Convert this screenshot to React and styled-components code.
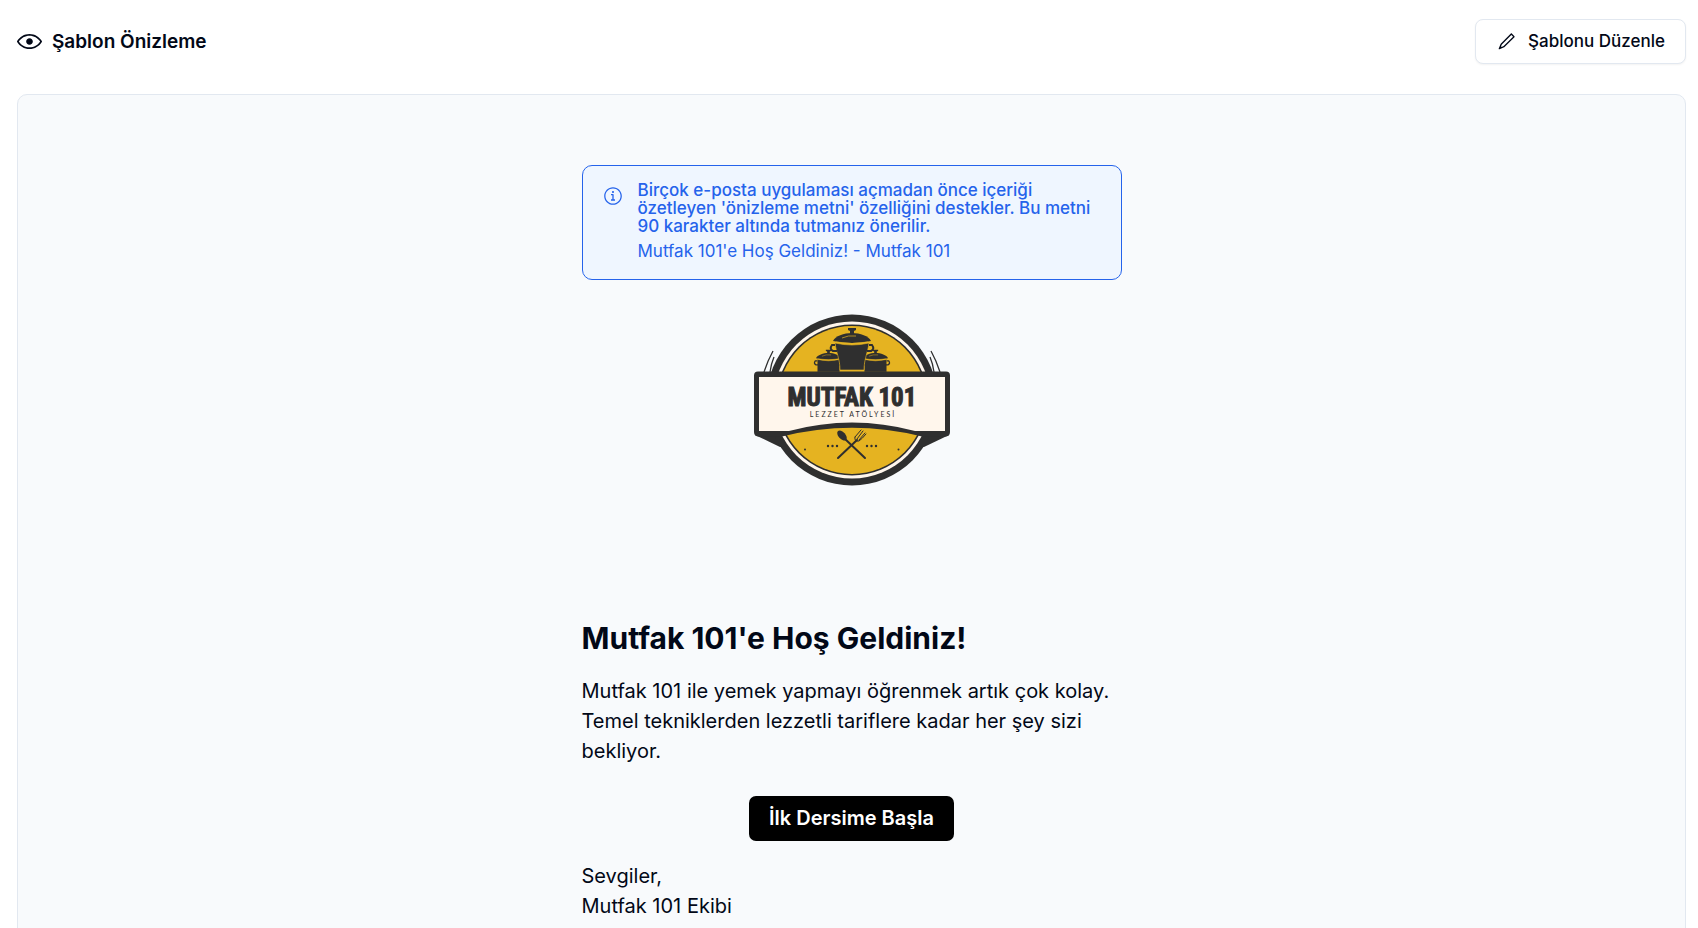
import React from "react";
import styled, { createGlobalStyle } from "styled-components";
import { RxEyeOpen, RxPencil1, RxInfoCircled } from "react-icons/rx";

const GlobalStyle = createGlobalStyle`
  *, *::before, *::after { box-sizing: border-box; }
  body {
    margin: 0;
    background: #ffffff;
    color: #020817;
    font-family: Inter, "Noto Sans", sans-serif;
  }
  h1, h2, p { margin: 0; }
`;

const Page = styled.div`
  padding: 19px 12px 0 17px;
`;

const Header = styled.header`
  display: flex;
  align-items: center;
  justify-content: space-between;
  margin-bottom: 30px;
`;

const Title = styled.h2`
  display: flex;
  align-items: center;
  gap: 10px;
  font-size: 19px;
  line-height: 30px;
  font-weight: 600;
`;

const EditButton = styled.button`
  display: flex;
  align-items: center;
  gap: 12px;
  height: 45px;
  padding: 0 20px;
  border: 1px solid #e2e8f0;
  border-radius: 8px;
  background: #ffffff;
  color: #020817;
  font: 500 17px/25px Inter, "Noto Sans", sans-serif;
  box-shadow: 0 1px 2px rgba(0, 0, 0, 0.05);
  cursor: pointer;
`;

const Panel = styled.main`
  padding: 70px 20px;
  border: 1px solid #e2e8f0;
  border-radius: 10px 10px 0 0;
  background: #f8fafc;
`;

const Email = styled.article`
  display: flex;
  flex-direction: column;
  max-width: 540px;
  margin: 0 auto;
`;

const Alert = styled.div`
  display: flex;
  gap: 15px;
  padding: 15px 20px;
  border: 1px solid #2563eb;
  border-radius: 10px;
  background: #eff6ff;
  color: #2563eb;
`;

const AlertIcon = styled.span`
  display: flex;
  flex: none;
  padding-top: 5px;
`;

const AlertTitle = styled.p`
  margin-bottom: 4px;
  font-size: 17px;
  line-height: 18px;
  font-weight: 500;
`;

const AlertText = styled.p`
  font-size: 17px;
  line-height: 25px;
`;

const LogoArt = styled.svg`
  display: block;
  width: 200px;
  height: 200px;
  margin: 21px auto 117px;
`;

const Heading = styled.h1`
  margin-bottom: 18px;
  font-size: 30px;
  line-height: 40px;
  font-weight: 700;
`;

const Paragraph = styled.p`
  font-size: 20px;
  line-height: 30px;
`;

const CallToAction = styled.a`
  align-self: center;
  margin: 30px 0 20px;
  padding: 0 20px;
  border-radius: 7px;
  background: #000000;
  color: #ffffff;
  font-size: 20px;
  line-height: 45px;
  font-weight: 600;
  text-decoration: none;
`;

const INK = "#2f2f2f";
const GOLD = "#e5b321";
const CREAM = "#fff6ec";

const TALL_BODY = "M-17-6Q0-2 17-6C16 3 12 10 12 21H-12C-12 10-16 3-17-6z";
const SQUAT_BODY = "M-17-6Q0-2 17-6V13H-17z";

function Pot({ body }) {
  return (
    <g fill={INK}>
      <path d="M-4-21h8v2l-2 1v3h-4v-3l-2-1z" />
      <path d="M-19-8C-17-13-8-16 0-16S17-13 19-8Q0-4-19-8z" />
      <path d={body} stroke={GOLD} strokeWidth="0.6" />
      <path d="M-17-4h-3q-3 4 1 6h4M17-4h3q3 4-1 6h-4" fill="none" stroke={INK} strokeWidth="2" />
      <path d="M-16-7Q0-4 16-7M-10-11Q-4-14 4-13" fill="none" stroke={GOLD} strokeWidth="0.7" />
    </g>
  );
}

function Logo() {
  return (
    <LogoArt viewBox="0 0 200 200" role="img" aria-label="Mutfak 101 Lezzet Atölyesi">
      <path d="M3 134L28 146H172L197 134z" fill={INK} />
      <circle cx="100" cy="99" r="85.5" fill={INK} />
      <circle cx="100" cy="99" r="78.5" fill={CREAM} />
      <circle cx="100" cy="99" r="75.5" fill={INK} />
      <circle cx="100" cy="99" r="74" fill={GOLD} />
      <g transform="translate(76.500 62.500) scale(0.66)">
        <Pot body={SQUAT_BODY} />
      </g>
      <g transform="translate(123.500 62.500) scale(0.66)">
        <Pot body={SQUAT_BODY} />
      </g>
      <g transform="translate(100 48)">
        <Pot body={TALL_BODY} />
      </g>
      <path
        d="M12 71Q16 59 21 50M18 71Q19 63 22 56M188 71Q184 59 179 50M182 71Q181 63 178 56"
        fill="none"
        stroke={INK}
        strokeWidth="1.300"
      />
      <path
        d="M6 70.500H194Q198 70.500 198 74.500V131Q198 135 194 135.500H170Q100 118 30 135.500H6Q2 135 2 131V74.500Q2 70.500 6 70.500z"
        fill={INK}
      />
      <path d="M7 76H193V130H163Q100 113 37 130H7z" fill={CREAM} />
      <text
        x="100"
        y="105"
        textAnchor="middle"
        fill={INK}
        stroke={INK}
        strokeWidth="1"
        fontFamily="'Liberation Sans Narrow', 'Roboto Condensed', 'DejaVu Sans Condensed', sans-serif"
        fontWeight="700"
        fontSize="25"
      >
        MUTFAK 101
      </text>
      <text
        x="101"
        y="116"
        textAnchor="middle"
        fill={INK}
        fontFamily="Lato, sans-serif"
        fontSize="7"
        letterSpacing="2"
      >
        LEZZET ATÖLYESİ
      </text>
      <g stroke={INK} fill="none" strokeLinecap="round">
        <path d="M92 137L113 157" strokeWidth="2" />
        <path d="M105 139L86 157" strokeWidth="2" />
        <path d="M103 136Q102 141 107 140Q110 138 114 133M103 136L109 129M105 138L111 130M107 139L113 132" strokeWidth="1" />
      </g>
      <ellipse cx="90" cy="134.500" rx="3.500" ry="6" transform="rotate(-42 90 134.500)" fill={INK} />
      <g fill={INK}>
        <circle cx="76" cy="145" r="1.200" />
        <circle cx="80.500" cy="145" r="1.200" />
        <circle cx="85" cy="145" r="1.200" />
        <circle cx="115" cy="145" r="1.200" />
        <circle cx="119.500" cy="145" r="1.200" />
        <circle cx="124" cy="145" r="1.200" />
        <circle cx="53" cy="148.500" r="1" />
        <circle cx="146.500" cy="148.500" r="1" />
      </g>
    </LogoArt>
  );
}

export default function App() {
  return (
    <>
      <GlobalStyle />
      <Page>
        <Header>
          <Title>
            <RxEyeOpen size={25} aria-hidden="true" />
            Şablon Önizleme
          </Title>
          <EditButton type="button">
            <RxPencil1 size={20} aria-hidden="true" />
            Şablonu Düzenle
          </EditButton>
        </Header>
        <Panel>
          <Email>
            <Alert role="note">
              <AlertIcon>
                <RxInfoCircled size={20} aria-hidden="true" />
              </AlertIcon>
              <div>
                <AlertTitle>
                  Birçok e-posta uygulaması açmadan önce içeriği özetleyen 'önizleme metni' özelliğini
                  destekler. Bu metni 90 karakter altında tutmanız önerilir.
                </AlertTitle>
                <AlertText>Mutfak 101'e Hoş Geldiniz! - Mutfak 101</AlertText>
              </div>
            </Alert>
            <Logo />
            <Heading>Mutfak 101'e Hoş Geldiniz!</Heading>
            <Paragraph>
              Mutfak 101 ile yemek yapmayı öğrenmek artık çok kolay. Temel tekniklerden lezzetli
              tariflere kadar her şey sizi bekliyor.
            </Paragraph>
            <CallToAction href="#ilk-ders">İlk Dersime Başla</CallToAction>
            <Paragraph>
              Sevgiler,
              <br />
              Mutfak 101 Ekibi
            </Paragraph>
          </Email>
        </Panel>
      </Page>
    </>
  );
}
